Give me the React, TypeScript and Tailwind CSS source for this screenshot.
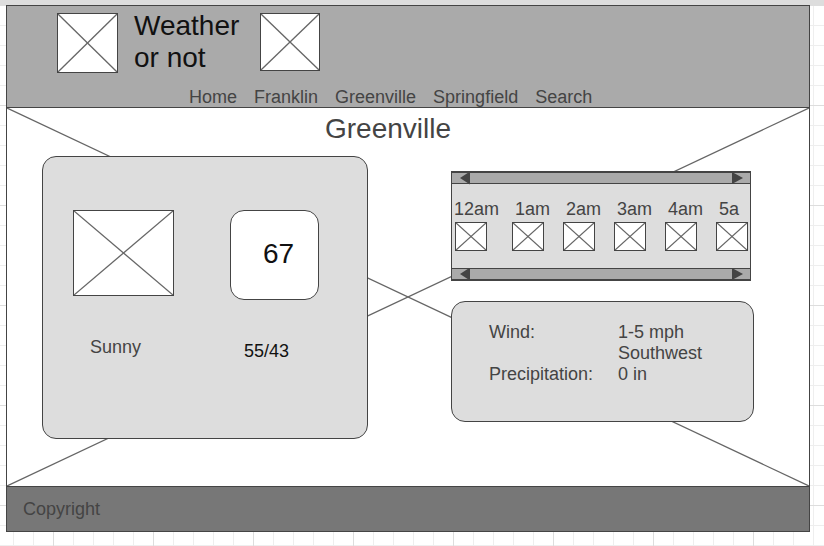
const pages = ["Home", "Franklin", "Greenville", "Springfield", "Search"];
const hours = ["12am", "1am", "2am", "3am", "4am", "5a"];

// Image placeholder: a framed white box with both diagonals.
function ImageBox({ label, className }: { label: string; className: string }) {
  return (
    <svg
      role="img"
      aria-label={label}
      className={`shrink-0 border border-[#444] bg-white ${className}`}
    >
      <line x1="0" y1="0" x2="100%" y2="100%" stroke="#666" strokeWidth="1.3" />
      <line x1="100%" y1="0" x2="0" y2="100%" stroke="#666" strokeWidth="1.3" />
    </svg>
  );
}

function ScrollBar({ className }: { className: string }) {
  return (
    <div
      className={`flex h-[13px] items-center justify-between border-[#444] bg-[#aaa] pr-[7px] pl-2 ${className}`}
    >
      <button type="button" aria-label="Earlier hours">
        <svg className="block h-[13px] w-[10px]" viewBox="0 0 10 13">
          <path d="M0 6 10 -0.5V12.5Z" fill="#444" />
        </svg>
      </button>
      <button type="button" aria-label="Later hours">
        <svg className="block h-[13px] w-[11px]" viewBox="0 0 11 13">
          <path d="M0 0 11 6 0 12Z" fill="#444" />
        </svg>
      </button>
    </div>
  );
}

function Header() {
  return (
    <header className="border-b border-[#444] bg-[#aaa] pt-[7px]">
      <div className="flex h-[60px] items-start gap-4 pl-[50px]">
        <ImageBox label="Logo" className="h-[60px] w-[61px]" />
        <h1 className="-mt-[3px] w-[110px] text-[28px] leading-8 text-[#111]">Weather or not</h1>
        <ImageBox label="Banner" className="h-[58px] w-[60px]" />
      </div>
      <nav className="mt-[15px] flex gap-[17px] pl-[182px] leading-[19px]">
        {pages.map((page) => (
          <a key={page} href="#">
            {page}
          </a>
        ))}
      </nav>
    </header>
  );
}

function CurrentWeather() {
  return (
    <section className="flex gap-14 rounded-[14px] border border-[#444] bg-[#ddd] px-[30px] pt-[53px] pb-[76px]">
      <div className="flex flex-col items-center gap-[41px]">
        <ImageBox label="Current conditions" className="h-[86px] w-[101px]" />
        <p className="pr-4">Sunny</p>
      </div>
      <div className="flex flex-col items-center gap-[41px] text-[#111]">
        <p className="flex h-[90px] w-[89px] items-center justify-center rounded-[14px] border border-[#444] bg-white pb-[2px] pl-2 text-[28px] leading-8">
          67
        </p>
        <p className="pr-4">55/43</p>
      </div>
    </section>
  );
}

function HourlyForecast() {
  return (
    <section className="mr-[3px] border-x border-[#444] bg-[#ddd]">
      <ScrollBar className="border-t-2 border-b" />
      <div className="pt-[15px] pb-[17px]">
        <div className="flex gap-4 pl-[2px]">
          {hours.map((hour) => (
            <span key={hour}>{hour}</span>
          ))}
        </div>
        <div className="mt-[2px] grid grid-cols-[57px_repeat(4,51px)_32px] pl-[3px]">
          {hours.map((hour) => (
            <ImageBox key={hour} label={`Forecast ${hour}`} className="h-[29px] w-8" />
          ))}
        </div>
      </div>
      <ScrollBar className="border-t border-b-2" />
    </section>
  );
}

function Details() {
  return (
    <section className="rounded-[14px] border border-[#444] bg-[#ddd] pt-5 pb-9 pl-[37px]">
      <dl className="grid grid-cols-[129px_1fr]">
        <dt>Wind:</dt>
        <dd>
          1-5 mph
          <br />
          Southwest
        </dd>
        <dt>Precipitation:</dt>
        <dd>0 in</dd>
      </dl>
    </section>
  );
}

export default function App() {
  return (
    <div className="min-h-screen bg-white bg-[linear-gradient(to_right,#ddd_1px,transparent_1px),linear-gradient(to_bottom,#ddd_1px,transparent_1px),linear-gradient(to_right,#eee_1px,transparent_1px),linear-gradient(to_bottom,#eee_1px,transparent_1px)] [background-position:53px_5px,53px_5px,13px_5px,13px_5px] [background-size:100px_100px,100px_100px,20px_20px,20px_20px] font-['Liberation_Sans',Arial,sans-serif] text-[18px] leading-[21px] text-[#444]">
      <div className="h-[5px] bg-[#ddd]" />
      <div className="mr-[14px] ml-[6px] border border-[#444] bg-white">
        <Header />
        <main className="relative">
          <svg className="absolute inset-0 h-full w-full" aria-hidden="true">
            <line x1="0" y1="0" x2="100%" y2="100%" stroke="#666" strokeWidth="1.3" />
            <line x1="100%" y1="0" x2="0" y2="100%" stroke="#666" strokeWidth="1.3" />
          </svg>
          <div className="relative pt-[5px] pb-[47px]">
            <h2 className="pr-10 text-center text-[28px] leading-8">Greenville</h2>
            <div className="mt-[11px] grid grid-cols-[326fr_303fr] items-start gap-[83px] pr-[55px] pl-[35px]">
              <CurrentWeather />
              <div className="mt-[15px] flex flex-col gap-5">
                <HourlyForecast />
                <Details />
              </div>
            </div>
          </div>
        </main>
        <footer className="border-t border-[#444] bg-[#777] px-4 pt-3 pb-[11px]">Copyright</footer>
      </div>
    </div>
  );
}
